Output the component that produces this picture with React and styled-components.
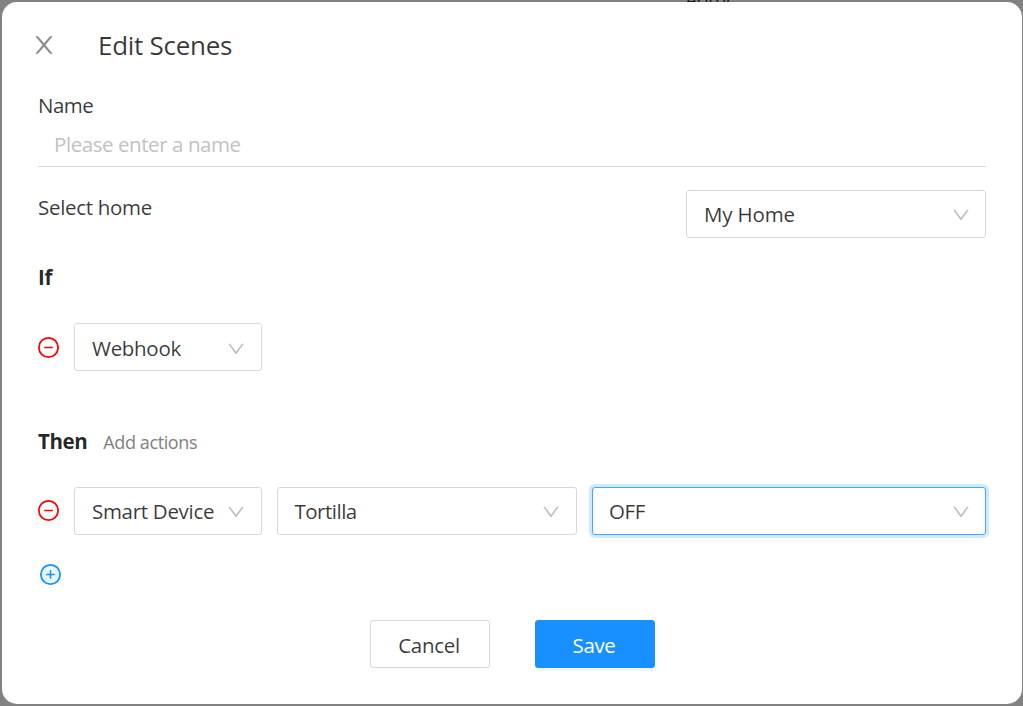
import React from "react";
import styled, { createGlobalStyle, css } from "styled-components";

const Global = createGlobalStyle`
  * { box-sizing: border-box; }
  html, body { margin: 0; padding: 0; height: 100%; overflow: hidden; }
  body {
    background: #808080;
    font-family: "Open Sans", "Noto Sans", sans-serif;
    color: rgba(0, 0, 0, 0.85);
  }
`;

const Backdrop = styled.div`
  position: relative;
  width: 1023px;
  height: 706px;
  padding: 2px 1px 2px 2px;
  background: #828282;
  overflow: hidden;
`;

const PageHeading = styled.span`
  position: absolute;
  left: 685px;
  top: -12px;
  font-size: 20px;
  line-height: 24px;
  letter-spacing: -1px;
  color: #1c1c1c;
`;

const Dialog = styled.section`
  position: relative;
  display: flex;
  flex-direction: column;
  width: 1020px;
  height: 702px;
  padding: 0 36px;
  background: #fff;
  border-radius: 15px;
`;

const Text = styled.span`
  font-size: ${(p) => p.$size || 20.5}px;
  font-weight: ${(p) => p.$weight || 400};
  letter-spacing: ${(p) => p.$track ?? -0.3}px;
  line-height: 32px;
  white-space: nowrap;
  color: ${(p) => p.$color || "rgba(0, 0, 0, 0.78)"};
`;

const Header = styled.header`
  display: flex;
  align-items: center;
  gap: 42px;
  height: 87px;
  padding-bottom: 1px;
  margin-left: -6px;
`;

const CloseButton = styled.button`
  display: flex;
  padding: 0;
  border: 0;
  background: none;
  color: #8c8c8c;
`;

const Field = styled.label`
  display: flex;
  flex-direction: column;
  height: 78px;
`;

const NameInput = styled.input`
  height: 46px;
  padding: 1px 16px 0;
  border: 0;
  border-bottom: 1px solid #d9d9d9;
  outline: 0;
  font: 400 20.5px/32px "Open Sans", "Noto Sans", sans-serif;
  letter-spacing: -0.43px;
  &::placeholder { color: #c2c2c2; opacity: 1; }
`;

const HomeRow = styled.div`
  display: flex;
  justify-content: space-between;
  align-items: flex-start;
  height: 48px;
  margin-top: 23px;
`;

const HomeLabel = styled.div`
  display: flex;
  padding-top: 1px;
`;

const SectionTitle = styled.div`
  display: flex;
  align-items: center;
  gap: 16px;
  height: 32px;
  margin-top: ${(p) => p.$top}px;
`;

const Hint = styled.div`
  display: flex;
  padding-top: 2px;
`;

const Row = styled.div`
  display: flex;
  align-items: center;
  gap: 15px;
  margin-top: ${(p) => p.$top}px;
`;

const SelectBox = styled.div`
  display: flex;
  align-items: center;
  justify-content: space-between;
  width: ${(p) => p.$width}px;
  height: 48px;
  padding: ${(p) => (p.$low ? 2 : 0)}px ${(p) => p.$right ?? 16}px 0 ${(p) => p.$left ?? 17}px;
  border: 1px solid #d9d9d9;
  border-radius: 3px;
  background: #fff;
  ${(p) =>
    p.$focused &&
    css`
      border-color: #40a9ff;
      box-shadow: 0 0 0 3px rgba(24, 144, 255, 0.2);
    `}
`;

const Footer = styled.footer`
  display: flex;
  justify-content: center;
  gap: 45px;
  margin-top: 35px;
  padding-left: 1px;
`;

const Button = styled.button`
  width: 120px;
  height: 48px;
  padding: 2px 2px 0 0;
  border: 1px solid ${(p) => (p.$primary ? "#1890ff" : "#d9d9d9")};
  border-radius: 3px;
  background: ${(p) => (p.$primary ? "#1890ff" : "#fff")};
  box-shadow: 0 3px 0 rgba(0, 0, 0, ${(p) => (p.$primary ? 0.045 : 0.016)});
  font-family: inherit;
`;

const IconSvg = styled.svg`
  display: block;
  flex: none;
`;

const ChevronSvg = styled(IconSvg)`
  margin-top: 2px;
`;

const IconButton = styled.button`
  display: flex;
  padding: 0 0 ${(p) => p.$lift || 0}px;
  border: 0;
  background: none;
  margin-left: ${(p) => p.$left || 0}px;
`;

const ChevronDown = () => (
  <ChevronSvg width="18" height="18" viewBox="64 64 896 896" fill="#bfbfbf">
    <path d="M884 256h-75c-5.1 0-9.9 2.5-12.9 6.6L512 654.2 227.9 262.6c-3-4.1-7.8-6.6-12.9-6.6h-75c-6.5 0-10.3 7.4-6.5 12.7l352.6 486.1c12.8 17.6 39 17.6 51.7 0l352.6-486.1c3.9-5.3.1-12.7-6.4-12.7z" />
  </ChevronSvg>
);

const CloseIcon = () => (
  <IconSvg width="24" height="24" viewBox="64 64 896 896" fill="currentColor">
    <path d="M563.8 512l262.5-312.9c4.4-5.2.7-13.1-6.1-13.1h-79.8c-4.7 0-9.2 2.1-12.3 5.7L511.6 449.8 295.1 191.7c-3-3.6-7.5-5.7-12.3-5.7H203c-6.8 0-10.5 7.9-6.1 13.1L459.4 512 196.9 824.9A7.95 7.95 0 00203 838h79.8c4.7 0 9.2-2.1 12.3-5.7l216.5-258.1 216.5 258.1c3 3.6 7.5 5.7 12.3 5.7h79.8c6.8 0 10.5-7.9 6.1-13.1L563.8 512z" />
  </IconSvg>
);

const CircleIcon = ({ color, fill, plus }) => (
  <IconSvg width="21" height="21" viewBox="64 64 896 896">
    <circle cx="512" cy="512" r="410" fill={fill} stroke={color} strokeWidth="76" />
    <rect x="328" y="480" width="368" height="64" rx="8" fill={color} />
    {plus && <rect x="480" y="328" width="64" height="368" rx="8" fill={color} />}
  </IconSvg>
);

const Select = ({ width, value, left, right, low, track, focused }) => (
  <SelectBox $width={width} $left={left} $right={right} $low={low} $focused={focused}>
    <Text $track={track}>{value}</Text>
    <ChevronDown />
  </SelectBox>
);

const RemoveButton = ({ lift }) => (
  <IconButton $lift={lift} aria-label="Remove">
    <CircleIcon color="#ff0000" fill="#fff" />
  </IconButton>
);

export default function App() {
  return (
    <Backdrop>
      <Global />
      <PageHeading>Admi</PageHeading>
      <Dialog>
        <Header>
          <CloseButton aria-label="Close"><CloseIcon /></CloseButton>
          <Text $size={26} $track={-0.28}>Edit Scenes</Text>
        </Header>
        <Field>
          <Text $track={-0.55}>Name</Text>
          <NameInput placeholder="Please enter a name" />
        </Field>
        <HomeRow>
          <HomeLabel><Text>Select home</Text></HomeLabel>
          <Select width={300} value="My Home" right={15} track={-0.15} />
        </HomeRow>
        <SectionTitle $top={23}>
          <Text $weight={700} $track={-0.4} $color="rgba(0, 0, 0, 0.85)">If</Text>
        </SectionTitle>
        <Row $top={30}>
          <RemoveButton />
          <Select width={188} value="Webhook" low />
        </Row>
        <SectionTitle $top={54}>
          <Text $weight={700} $track={-0.4} $color="rgba(0, 0, 0, 0.85)">Then</Text>
          <Hint><Text $size={18} $track={-0.4} $color="#808080">Add actions</Text></Hint>
        </SectionTitle>
        <Row $top={30}>
          <RemoveButton lift={2} />
          <Select width={188} value="Smart Device" />
          <Select width={300} value="Tortilla" left={16.5} track={-0.5} />
          <Select width={394} value="OFF" left={16} right={15} track={-0.4} focused />
        </Row>
        <Row $top={29}>
          <IconButton $left={2} aria-label="Add">
            <CircleIcon color="#1890ff" fill="#e6f7ff" plus />
          </IconButton>
        </Row>
        <Footer>
          <Button><Text>Cancel</Text></Button>
          <Button $primary><Text $track={-0.4} $color="#fff">Save</Text></Button>
        </Footer>
      </Dialog>
    </Backdrop>
  );
}
